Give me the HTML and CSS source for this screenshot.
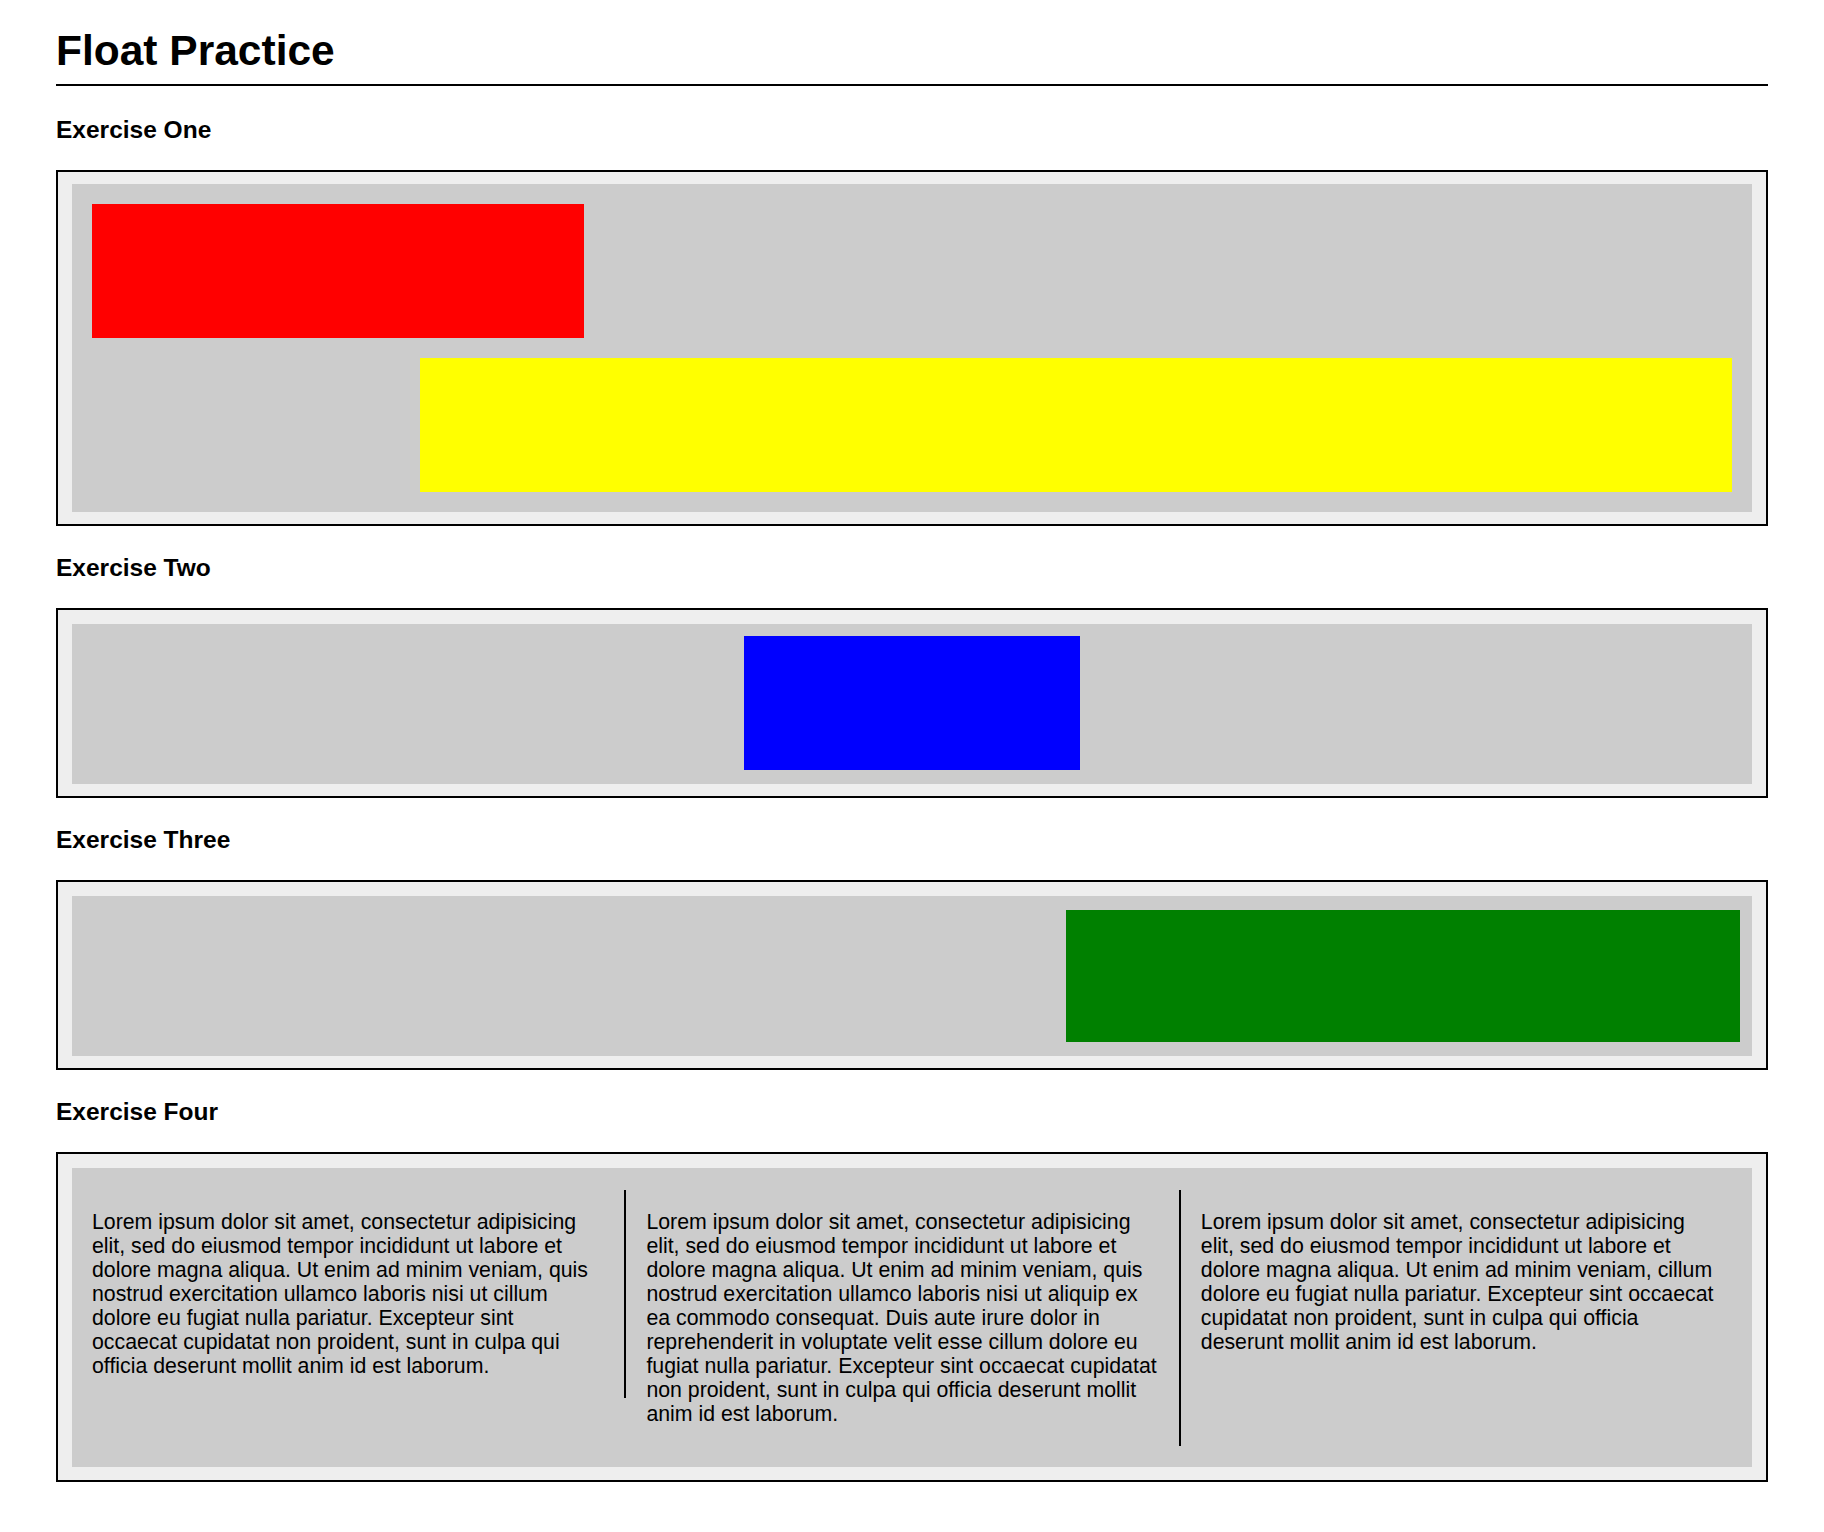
FILE: index.html
```html
<!DOCTYPE html>
<html lang="en">
<head>
<meta charset="utf-8">
<title>Float Practice</title>
<link rel="stylesheet" href="styles.css">
</head>
<body>
<div class="page">
  <h1 class="title">Float Practice</h1>

  <h2 class="ex-title">Exercise One</h2>
  <div class="box box-first">
    <div class="inner inner-one">
      <div class="block red"></div>
      <div class="block yellow"></div>
    </div>
  </div>

  <h2 class="ex-title">Exercise Two</h2>
  <div class="box">
    <div class="inner inner-two">
      <div class="block blue"></div>
    </div>
  </div>

  <h2 class="ex-title">Exercise Three</h2>
  <div class="box">
    <div class="inner inner-three">
      <div class="block green"></div>
    </div>
  </div>

  <h2 class="ex-title">Exercise Four</h2>
  <div class="box box-last">
    <div class="inner inner-four">
      <div class="col col-bordered">
        <p>Lorem ipsum dolor sit amet, consectetur adipisicing elit, sed do eiusmod tempor incididunt ut labore et dolore magna aliqua. Ut enim ad minim veniam, quis nostrud exercitation ullamco laboris nisi ut cillum dolore eu fugiat nulla pariatur. Excepteur sint occaecat cupidatat non proident, sunt in culpa qui officia deserunt mollit anim id est laborum.</p>
      </div>
      <div class="col col-bordered">
        <p>Lorem ipsum dolor sit amet, consectetur adipisicing elit, sed do eiusmod tempor incididunt ut labore et dolore magna aliqua. Ut enim ad minim veniam, quis nostrud exercitation ullamco laboris nisi ut aliquip ex ea commodo consequat. Duis aute irure dolor in reprehenderit in voluptate velit esse cillum dolore eu fugiat nulla pariatur. Excepteur sint occaecat cupidatat non proident, sunt in culpa qui officia deserunt mollit anim id est laborum.</p>
      </div>
      <div class="col col-last">
        <p>Lorem ipsum dolor sit amet, consectetur adipisicing elit, sed do eiusmod tempor incididunt ut labore et dolore magna aliqua. Ut enim ad minim veniam, cillum dolore eu fugiat nulla pariatur. Excepteur sint occaecat cupidatat non proident, sunt in culpa qui officia deserunt mollit anim id est laborum.</p>
      </div>
    </div>
  </div>
</div>
</body>
</html>
```

FILE: styles.css
```css
* {
  box-sizing: border-box;
}

html, body {
  margin: 0;
  padding: 0;
  background: #fff;
  color: #000;
  font-family: "Liberation Sans", Arial, Helvetica, sans-serif;
}

.page {
  padding: 0 56px 50px;
}

.title {
  margin: 26px 0 30px;
  padding-bottom: 8px;
  font-size: 42.5px;
  line-height: 50px;
  font-weight: bold;
  border-bottom: 2px solid #000;
}

.ex-title {
  margin: 28px 0 26px;
  font-size: 24.5px;
  line-height: 28px;
  font-weight: bold;
}

.box {
  border: 2px solid #000;
  background: #eee;
  padding: 14px 14px 12px;
}

.box-first {
  padding: 12px 14px;
}

.box-last {
  padding-bottom: 13px;
}

.inner {
  background: #ccc;
}

.inner-one {
  padding: 20px;
}

.inner-two {
  padding: 12px 0 14px;
}

.inner-three {
  padding: 14px 12px 14px 0;
}

.inner-four {
  display: flex;
  align-items: flex-start;
  padding: 22px 0 21px;
}

.block {
  height: 134px;
}

.red {
  width: 30%;
  background: #f00;
  margin-bottom: 20px;
}

.yellow {
  width: 80%;
  margin-left: auto;
  background: #ff0;
}

.blue {
  width: 20%;
  margin: 0 auto;
  background: #00f;
}

.green {
  width: 674px;
  height: 132px;
  margin-left: auto;
  background: #008000;
}

.col {
  width: 33%;
  flex: 0 0 33%;
  padding: 20px;
}

.col-last {
  width: 33.4%;
  flex: 0 0 33.4%;
}

.col-bordered {
  border-right: 2px solid #000;
}

.col p {
  margin: 0;
  font-size: 21.3px;
  line-height: 24px;
}
```
